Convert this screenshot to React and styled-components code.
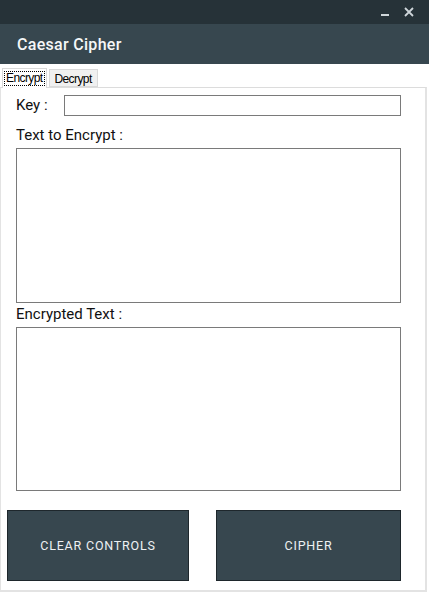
import React from 'react';
import styled, {createGlobalStyle} from 'styled-components';

const GlobalStyle = createGlobalStyle`
    html, body {
        margin: 0;
        padding: 0;
        background: #ffffff;
    }
    * {
        box-sizing: border-box;
    }
`;

const Window = styled.div`
    width: 429px;
    height: 595px;
    display: flex;
    flex-direction: column;
    background: #ffffff;
    overflow: hidden;
`;

const TitleBar = styled.div`
    height: 24px;
    background: #263238;
    display: flex;
    justify-content: flex-end;
    align-items: center;
    gap: 14px;
    padding: 0 15px 0 0;
`;

const WinButton = styled.span`
    width: 10px;
    height: 10px;
    display: flex;
    align-items: center;
    justify-content: center;
`;

const Header = styled.header`
    height: 40px;
    background: #37474f;
    display: flex;
    align-items: center;
    padding: 0 0 0 17px;
`;

const Title = styled.h1`
    margin: 0;
    font-family: Roboto, "Liberation Sans", sans-serif;
    font-weight: 500;
    font-size: 16px;
    letter-spacing: 0.3px;
    color: #f5f7f8;
`;

const Body = styled.div`
    flex: 1;
    display: flex;
    flex-direction: column;
    padding: 4px 2px 3px 0;
`;

const TabStrip = styled.div`
    display: flex;
    align-items: flex-end;
    padding: 0 0 0 2px;
    height: 20px;
    position: relative;
    z-index: 1;
`;

const Tab = styled.div`
    font-family: "Liberation Sans", Arial, sans-serif;
    font-size: 12px;
    letter-spacing: -0.6px;
    color: #000000;
    border: 1px solid #d9d9d9;
    border-bottom: ${p => (p.$active ? 'none' : '1px solid #d9d9d9')};
    background: ${p => (p.$active ? '#ffffff' : '#f0f0f0')};
    height: ${p => (p.$active ? '20px' : '18px')};
    padding: ${p => (p.$active ? '2px 1px 0' : '2px 2px 0 2px')};
    margin: ${p => (p.$active ? '0 2px 0 0' : '0 0 1px 0')};
`;

const TabLabel = styled.span`
    display: inline-block;
    padding: 0 2px 0 1px;
    line-height: 13px;
    border: ${p => (p.$focus ? '1px dotted #000000' : '1px solid transparent')};
`;

const Panel = styled.div`
    flex: 1;
    border-top: 1px solid #dcdcdc;
    border-left: 1px solid #e3e3e3;
    border-right: 2px solid #e3e3e3;
    border-bottom: 2px solid #e3e3e3;
    margin-top: -1px;
    display: flex;
    flex-direction: column;
    padding: 7px 24px 0 15px;
`;

const KeyRow = styled.div`
    display: flex;
    align-items: center;
    gap: 16px;
    height: 21px;
`;

const Label = styled.label`
    font-family: Roboto, "Liberation Sans", sans-serif;
    font-size: 15px;
    color: #111111;
    line-height: 17px;
`;

const KeyInput = styled.div`
    flex: 1;
    height: 21px;
    border: 1px solid #7a7a7a;
    background: #ffffff;
`;

const FieldLabel = styled(Label)`
    display: block;
    margin: ${p => p.$top} 0 4px 0;
`;

const TextBox = styled.div`
    height: ${p => p.$h};
    border: 1px solid #7a7a7a;
    background: #ffffff;
`;

const Buttons = styled.div`
    display: flex;
    margin: 19px 0 0 -9px;
    gap: 27px;
`;

const Button = styled.button`
    width: ${p => p.$w};
    height: 71px;
    background: #37474f;
    border: 1px solid #1e272c;
    color: #eef1f3;
    font-family: Roboto, "Liberation Sans", sans-serif;
    font-weight: 400;
    font-size: 12.5px;
    letter-spacing: 0.8px;
    padding: 0;
    cursor: pointer;
`;

const App = () => {
    return (
        <Window>
            <GlobalStyle/>
            <TitleBar>
                <WinButton>
                    <svg width="10" height="10" viewBox="0 0 10 10">
                        <rect x="1" y="7" width="8" height="2" fill="#cfd6da"/>
                    </svg>
                </WinButton>
                <WinButton>
                    <svg width="10" height="10" viewBox="0 0 10 10">
                        <path d="M1 1 L9 9 M9 1 L1 9" stroke="#cfd6da" strokeWidth="1.8"/>
                    </svg>
                </WinButton>
            </TitleBar>
            <Header>
                <Title>Caesar Cipher</Title>
            </Header>
            <Body>
                <TabStrip>
                    <Tab $active><TabLabel $focus>Encrypt</TabLabel></Tab>
                    <Tab><TabLabel>Decrypt</TabLabel></Tab>
                </TabStrip>
                <Panel>
                    <KeyRow>
                        <Label>Key :</Label>
                        <KeyInput/>
                    </KeyRow>
                    <FieldLabel $top="11px">Text to Encrypt :</FieldLabel>
                    <TextBox $h="155px"/>
                    <FieldLabel $top="3px">Encrypted Text :</FieldLabel>
                    <TextBox $h="164px"/>
                    <Buttons>
                        <Button $w="182px">CLEAR CONTROLS</Button>
                        <Button $w="185px">CIPHER</Button>
                    </Buttons>
                </Panel>
            </Body>
        </Window>
    );
};

export default App;
